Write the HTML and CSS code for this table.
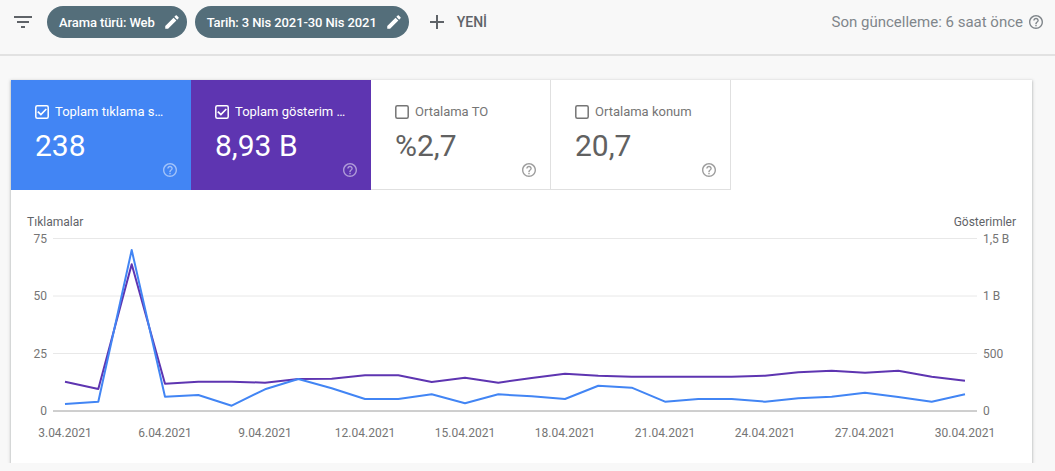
FILE: index.html
```html
<!DOCTYPE html>
<html lang="tr">
<head>
<meta charset="utf-8">
<title>Performans</title>
<link rel="stylesheet" href="styles.css">
</head>
<body>
<header class="topbar">
  <svg class="filter-icon" viewBox="0 0 24 24" width="24" height="24"><path d="M10 18h4v-2h-4v2zM3 6v2h18V6H3zm3 7h12v-2H6v2z"/></svg>
  <div class="chip">
    <span>Arama türü: Web</span>
    <svg class="chip-edit" viewBox="0 0 24 24" width="18" height="18"><path d="M3 17.25V21h3.75L17.81 9.94l-3.75-3.75L3 17.25zM20.71 7.04c.39-.39.39-1.02 0-1.41l-2.34-2.34c-.39-.39-1.02-.39-1.41 0l-1.83 1.83 3.75 3.75 1.83-1.83z"/></svg>
  </div>
  <div class="chip">
    <span>Tarih: 3 Nis 2021-30 Nis 2021</span>
    <svg class="chip-edit" viewBox="0 0 24 24" width="18" height="18"><path d="M3 17.25V21h3.75L17.81 9.94l-3.75-3.75L3 17.25zM20.71 7.04c.39-.39.39-1.02 0-1.41l-2.34-2.34c-.39-.39-1.02-.39-1.41 0l-1.83 1.83 3.75 3.75 1.83-1.83z"/></svg>
  </div>
  <div class="add-btn">
    <svg viewBox="0 0 24 24" width="24" height="24"><path d="M19 13h-6v6h-2v-6H5v-2h6V5h2v6h6v2z"/></svg>
    <span>YENİ</span>
  </div>
  <div class="updated">
    <span>Son güncelleme: 6 saat önce</span>
    <svg class="help" viewBox="2 2 20 20" width="14" height="14"><path d="M11 18h2v-2h-2v2zm1-16C6.48 2 2 6.48 2 12s4.48 10 10 10 10-4.48 10-10S17.52 2 12 2zm0 18c-4.41 0-8-3.59-8-8s3.59-8 8-8 8 3.59 8 8-3.59 8-8 8zm0-14c-2.21 0-4 1.79-4 4h2c0-1.1.9-2 2-2s2 .9 2 2c0 2-3 1.75-3 5h2c0-2.25 3-2.5 3-5 0-2.21-1.79-4-4-4z"/></svg>
  </div>
</header>

<main class="content">
  <section class="card">
    <div class="tiles">
      <div class="tile tile-clicks">
        <div class="tile-head">
          <svg class="cb" viewBox="0 0 14 14" width="14" height="14"><rect x="0.8" y="0.8" width="12.4" height="12.4" rx="1.5"/><polyline points="3.4,7.2 5.9,9.6 10.7,4.6"/></svg>
          <span class="tile-label">Toplam tıklama sayısı</span>
        </div>
        <div class="tile-value">238</div>
        <svg class="help tile-help" viewBox="2 2 20 20" width="14" height="14"><path d="M11 18h2v-2h-2v2zm1-16C6.48 2 2 6.48 2 12s4.48 10 10 10 10-4.48 10-10S17.52 2 12 2zm0 18c-4.41 0-8-3.59-8-8s3.59-8 8-8 8 3.59 8 8-3.59 8-8 8zm0-14c-2.21 0-4 1.79-4 4h2c0-1.1.9-2 2-2s2 .9 2 2c0 2-3 1.75-3 5h2c0-2.25 3-2.5 3-5 0-2.21-1.79-4-4-4z"/></svg>
      </div>
      <div class="tile tile-impr">
        <div class="tile-head">
          <svg class="cb" viewBox="0 0 14 14" width="14" height="14"><rect x="0.8" y="0.8" width="12.4" height="12.4" rx="1.5"/><polyline points="3.4,7.2 5.9,9.6 10.7,4.6"/></svg>
          <span class="tile-label">Toplam gösterim sayısı</span>
        </div>
        <div class="tile-value">8,93 B</div>
        <svg class="help tile-help" viewBox="2 2 20 20" width="14" height="14"><path d="M11 18h2v-2h-2v2zm1-16C6.48 2 2 6.48 2 12s4.48 10 10 10 10-4.48 10-10S17.52 2 12 2zm0 18c-4.41 0-8-3.59-8-8s3.59-8 8-8 8 3.59 8 8-3.59 8-8 8zm0-14c-2.21 0-4 1.79-4 4h2c0-1.1.9-2 2-2s2 .9 2 2c0 2-3 1.75-3 5h2c0-2.25 3-2.5 3-5 0-2.21-1.79-4-4-4z"/></svg>
      </div>
      <div class="tile tile-off">
        <div class="tile-head">
          <svg class="cb" viewBox="0 0 14 14" width="14" height="14"><rect x="0.8" y="0.8" width="12.4" height="12.4" rx="1.5"/></svg>
          <span class="tile-label">Ortalama TO</span>
        </div>
        <div class="tile-value">%2,7</div>
        <svg class="help tile-help" viewBox="2 2 20 20" width="14" height="14"><path d="M11 18h2v-2h-2v2zm1-16C6.48 2 2 6.48 2 12s4.48 10 10 10 10-4.48 10-10S17.52 2 12 2zm0 18c-4.41 0-8-3.59-8-8s3.59-8 8-8 8 3.59 8 8-3.59 8-8 8zm0-14c-2.21 0-4 1.79-4 4h2c0-1.1.9-2 2-2s2 .9 2 2c0 2-3 1.75-3 5h2c0-2.25 3-2.5 3-5 0-2.21-1.79-4-4-4z"/></svg>
      </div>
      <div class="tile tile-off">
        <div class="tile-head">
          <svg class="cb" viewBox="0 0 14 14" width="14" height="14"><rect x="0.8" y="0.8" width="12.4" height="12.4" rx="1.5"/></svg>
          <span class="tile-label">Ortalama konum</span>
        </div>
        <div class="tile-value">20,7</div>
        <svg class="help tile-help" viewBox="2 2 20 20" width="14" height="14"><path d="M11 18h2v-2h-2v2zm1-16C6.48 2 2 6.48 2 12s4.48 10 10 10 10-4.48 10-10S17.52 2 12 2zm0 18c-4.41 0-8-3.59-8-8s3.59-8 8-8 8 3.59 8 8-3.59 8-8 8zm0-14c-2.21 0-4 1.79-4 4h2c0-1.1.9-2 2-2s2 .9 2 2c0 2-3 1.75-3 5h2c0-2.25 3-2.5 3-5 0-2.21-1.79-4-4-4z"/></svg>
      </div>
    </div>

    <svg class="chart" viewBox="11 190 1021 273" width="1021" height="273">
      <text class="axis-title" x="27" y="225.5">Tıklamalar</text>
      <text class="axis-title" x="1016" y="225.5" text-anchor="end">Gösterimler</text>

      <line class="grid" x1="53" y1="238.5" x2="977" y2="238.5"/>
      <line class="grid" x1="53" y1="296" x2="977" y2="296"/>
      <line class="grid" x1="53" y1="353.5" x2="977" y2="353.5"/>
      <line class="baseline" x1="53" y1="411" x2="977" y2="411"/>

      <text class="tick" x="47" y="242.5" text-anchor="end">75</text>
      <text class="tick" x="47" y="300" text-anchor="end">50</text>
      <text class="tick" x="47" y="357.5" text-anchor="end">25</text>
      <text class="tick" x="47" y="415" text-anchor="end">0</text>

      <text class="tick" x="983" y="242.5">1,5 B</text>
      <text class="tick" x="983" y="300">1 B</text>
      <text class="tick" x="983" y="357.5">500</text>
      <text class="tick" x="983" y="415">0</text>

      <text class="tick" x="65" y="437" text-anchor="middle">3.04.2021</text>
      <text class="tick" x="165" y="437" text-anchor="middle">6.04.2021</text>
      <text class="tick" x="265" y="437" text-anchor="middle">9.04.2021</text>
      <text class="tick" x="365" y="437" text-anchor="middle">12.04.2021</text>
      <text class="tick" x="465" y="437" text-anchor="middle">15.04.2021</text>
      <text class="tick" x="565" y="437" text-anchor="middle">18.04.2021</text>
      <text class="tick" x="665" y="437" text-anchor="middle">21.04.2021</text>
      <text class="tick" x="765" y="437" text-anchor="middle">24.04.2021</text>
      <text class="tick" x="865" y="437" text-anchor="middle">27.04.2021</text>
      <text class="tick" x="965" y="437" text-anchor="middle">30.04.2021</text>

      <polyline class="series series-impr" points="65,381.7 98.3,389 131.7,264.3 165,383.7 198.3,381.7 231.7,381.7 265,382.7 298.3,379 331.7,378.7 365,375.3 398.3,375.3 431.7,382 465,377.7 498.3,382.7 531.7,378 565,373.7 598.3,375.7 631.7,376.7 665,376.7 698.3,376.7 731.7,376.7 765,375.7 798.3,372.3 831.7,370.7 865,372.7 898.3,370.7 931.7,376.7 965,380.7"/>
      <polyline class="series series-clicks" points="65,404 98.3,401.7 131.7,250 165,396.7 198.3,395 231.7,405.7 265,389.3 298.3,379 331.7,388.3 365,399 398.3,399 431.7,394.3 465,403.3 498.3,394.3 531.7,396.3 565,399 598.3,385.7 631.7,387.7 665,401.7 698.3,399 731.7,399 765,401.7 798.3,398.3 831.7,396.7 865,392.7 898.3,397 931.7,401.7 965,394.3"/>
    </svg>
  </section>
</main>
</body>
</html>
```

FILE: styles.css
```css
* { box-sizing: border-box; }

html, body {
  margin: 0;
  padding: 0;
  background: #f8f8f8;
  font-family: Roboto, "Liberation Sans", Arial, sans-serif;
  color: #202124;
}

.topbar {
  display: flex;
  align-items: center;
  height: 56px;
  padding: 6px 12px 16px 11px;
  border-bottom: 2px solid #e2e2e2;
}

.filter-icon {
  fill: #5f6368;
  flex: 0 0 auto;
  margin-right: 12px;
}

.chip {
  display: flex;
  align-items: center;
  gap: 8px;
  height: 32px;
  padding: 0 6px 0 12px;
  margin-right: 8px;
  border-radius: 16px;
  background: #546e7a;
  color: #fff;
  font-size: 13px;
  font-weight: 500;
  letter-spacing: -0.1px;
  white-space: nowrap;
}

.chip-edit { fill: #fff; flex: 0 0 auto; }

.add-btn {
  display: flex;
  align-items: center;
  gap: 8px;
  margin-left: 8px;
  color: #5f6368;
  font-size: 14px;
  font-weight: 500;
}

.add-btn svg { fill: #5f6368; }

.updated {
  margin-left: auto;
  display: flex;
  align-items: center;
  gap: 6px;
  color: #80868b;
  font-size: 15px;
}

.updated .help { fill: #80868b; }

.content {
  padding: 24px 23px 0 11px;
}

.card {
  width: 1021px;
  background: #fff;
  box-shadow: 0 1px 2px rgba(60, 64, 67, 0.3), 0 1px 3px 1px rgba(60, 64, 67, 0.15);
}

.tiles {
  display: flex;
}

.tile {
  flex: 0 0 180px;
  height: 110px;
  display: flex;
  flex-direction: column;
  padding: 25px 14px 13px 24px;
}

.tile-clicks { background: #4285f4; color: #fff; }
.tile-impr { background: #5e35b1; color: #fff; }
.tile-off {
  background: #fff;
  border-right: 1px solid #e0e0e0;
  border-bottom: 1px solid #e0e0e0;
}

.tile-head {
  display: flex;
  align-items: center;
  gap: 6px;
  height: 14px;
}

.cb { flex: 0 0 auto; }
.cb rect { fill: none; stroke-width: 1.5; }
.cb polyline { fill: none; stroke-width: 1.7; stroke-linecap: square; }
.tile-clicks .cb rect, .tile-impr .cb rect,
.tile-clicks .cb polyline, .tile-impr .cb polyline { stroke: #fff; }
.tile-off .cb rect { stroke: #757575; }

.tile-label {
  font-size: 13px;
  line-height: 14px;
  white-space: nowrap;
  overflow: hidden;
  text-overflow: ellipsis;
  max-width: 112px;
}

.tile-off .tile-label { color: #757575; }

.tile-value {
  margin-top: 9px;
  font-size: 30px;
  line-height: 35px;
  white-space: nowrap;
}

.tile-off .tile-value { color: #616161; }

.tile-help {
  margin-top: auto;
  align-self: flex-end;
  flex: 0 0 auto;
}

.tile-clicks .tile-help, .tile-impr .tile-help { fill: rgba(255, 255, 255, 0.5); }
.tile-off .tile-help { fill: #9e9e9e; }

.chart {
  display: block;
  font-family: Roboto, "Liberation Sans", Arial, sans-serif;
}

.axis-title {
  font-size: 12px;
  fill: #5f6368;
}

.tick {
  font-size: 12px;
  fill: #757575;
}

.grid {
  stroke: #e8e8e8;
  stroke-width: 1;
}

.baseline {
  stroke: #9e9e9e;
  stroke-width: 1;
}

.series {
  fill: none;
  stroke-width: 2;
  stroke-linejoin: round;
}

.series-impr { stroke: #5e35b1; }
.series-clicks { stroke: #4285f4; }
```
